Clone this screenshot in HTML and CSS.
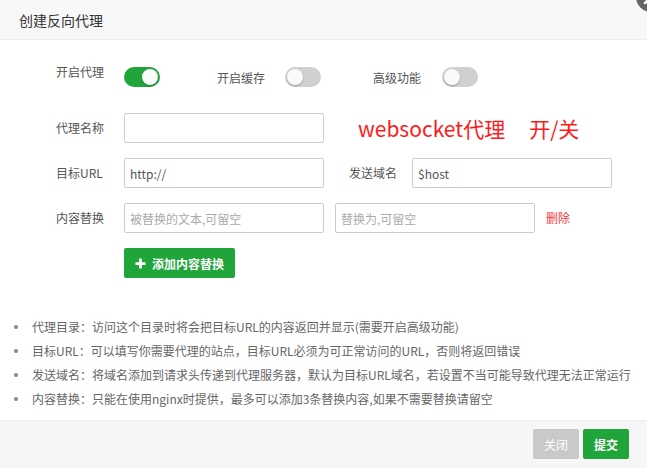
FILE: index.html
```html
<!DOCTYPE html>
<html lang="zh-CN">
<head>
<meta charset="utf-8">
<title>创建反向代理</title>
<link rel="stylesheet" href="styles.css">
</head>
<body>
<div class="dialog">
  <div class="header">
    <span class="title">创建反向代理</span>
    <span class="close">
      <svg viewBox="0 0 30 30" width="30" height="30"><circle cx="15" cy="15" r="15" fill="#666"/><path d="M9 9 L21 21 M21 9 L9 21" stroke="#fff" stroke-width="2.5" stroke-linecap="round"/></svg>
    </span>
  </div>
  <div class="content">
    <div class="switch-row">
      <span class="lbl lbl-first">开启代理</span>
      <span class="toggle on"><span class="knob"></span></span>
      <span class="lbl lbl-sw lbl-2">开启缓存</span>
      <span class="toggle"><span class="knob"></span></span>
      <span class="lbl lbl-sw lbl-3">高级功能</span>
      <span class="toggle"><span class="knob"></span></span>
    </div>
    <div class="row">
      <span class="lbl">代理名称</span>
      <input class="inp" type="text">
      <span class="ws">websocket代理</span>
      <span class="ws ws-sw">开/关</span>
    </div>
    <div class="row">
      <span class="lbl">目标URL</span>
      <input class="inp" type="text" value="http://">
      <span class="lbl lbl-host">发送域名</span>
      <input class="inp inp-host" type="text" value="$host">
    </div>
    <div class="row">
      <span class="lbl">内容替换</span>
      <input class="inp" type="text" placeholder="被替换的文本,可留空">
      <input class="inp inp-rep" type="text" placeholder="替换为,可留空">
      <span class="del">删除</span>
    </div>
    <div class="row row-btn">
      <button class="btn-add" type="button"><svg class="plus" viewBox="0 0 12 12" width="11" height="11"><path d="M6 0.5 V11.5 M0.5 6 H11.5" stroke="#fff" stroke-width="3"/></svg>添加内容替换</button>
    </div>
    <ul class="notes">
      <li>代理目录：访问这个目录时将会把目标URL的内容返回并显示(需要开启高级功能)</li>
      <li>目标URL：可以填写你需要代理的站点，目标URL必须为可正常访问的URL，否则将返回错误</li>
      <li>发送域名：将域名添加到请求头传递到代理服务器，默认为目标URL域名，若设置不当可能导致代理无法正常运行</li>
      <li>内容替换：只能在使用nginx时提供，最多可以添加3条替换内容,如果不需要替换请留空</li>
    </ul>
  </div>
  <div class="footer">
    <button class="btn btn-close" type="button">关闭</button>
    <button class="btn btn-submit" type="button">提交</button>
  </div>
</div>
</body>
</html>
```

FILE: styles.css
```css
html, body {
  margin: 0;
  padding: 0;
  overflow: hidden;
  background: #fff;
}
body {
  font-family: "Microsoft YaHei", "Noto Sans CJK SC", sans-serif;
  font-size: 12px;
  color: #555;
}
.dialog {
  position: relative;
  width: 647px;
  height: 468px;
  display: flex;
  flex-direction: column;
}
.header {
  height: 40px;
  background: #f8f8f8;
  border-bottom: 1px solid #eee;
  box-sizing: border-box;
  padding-left: 19px;
  display: flex;
  align-items: center;
}
.title {
  font-size: 14px;
  color: #333;
  line-height: 20px;
}
.close {
  position: absolute;
  right: -19px;
  top: -18px;
  width: 30px;
  height: 30px;
}
.close svg { display: block; }
.content {
  flex: 1;
  padding: 27px 0 0 56px;
}
.switch-row {
  display: flex;
  align-items: flex-start;
  height: 20px;
}
.lbl {
  display: inline-block;
  width: 48px;
  line-height: 16px;
  white-space: nowrap;
  color: #555;
}
.lbl-first {
  margin-top: -3px;
  margin-right: 20px;
}
.lbl-sw {
  margin-top: 3px;
}
.lbl-2 {
  margin-left: 57px;
  margin-right: 20px;
}
.lbl-3 {
  margin-left: 52px;
  margin-right: 21px;
}
.toggle {
  position: relative;
  display: inline-block;
  width: 36px;
  height: 20px;
  border-radius: 10px;
  background: #d0d0d0;
  box-sizing: border-box;
}
.toggle.on {
  background: #20a53a;
}
.knob {
  position: absolute;
  top: 2px;
  left: 2px;
  width: 16px;
  height: 16px;
  border-radius: 50%;
  background: #fafafa;
  box-shadow: 0 1px 2px rgba(0,0,0,0.25);
}
.toggle.on .knob {
  left: 18px;
}
.row {
  display: flex;
  align-items: center;
  margin-top: 15px;
  height: 30px;
}
.switch-row + .row {
  margin-top: 26px;
}
.row > .lbl:first-child {
  margin-right: 20px;
}
.inp {
  width: 200px;
  height: 30px;
  box-sizing: border-box;
  border: 1px solid #ccc;
  border-radius: 2px;
  padding: 0 5px;
  font-family: "Microsoft YaHei", "Noto Sans CJK SC", sans-serif;
  font-size: 12px;
  color: #555;
  outline: none;
}
.inp::placeholder {
  color: #aaa;
}
.ws {
  color: #ff1a1a;
  font-size: 21px;
  line-height: 24px;
  margin-left: 34px;
  white-space: nowrap;
}
.ws-sw {
  margin-left: 24px;
}
.lbl-host {
  margin-left: 25px;
  margin-right: 15px;
}
.inp-rep {
  margin-left: 11px;
}
.del {
  margin-left: 11px;
  color: #ef3a3a;
  line-height: 16px;
}
.row-btn {
  padding-left: 68px;
}
.btn-add {
  height: 30px;
  width: 111px;
  border: none;
  border-radius: 2px;
  background: #20a53a;
  color: #fff;
  font-family: "Microsoft YaHei", "Noto Sans CJK SC", sans-serif;
  font-size: 12px;
  font-weight: bold;
  display: flex;
  align-items: center;
  padding: 0 0 0 11px;
  cursor: pointer;
}
.plus {
  margin-right: 6px;
}
.notes {
  margin: 37px 0 0 -56px;
  padding: 0 0 0 32px;
  list-style: none;
  color: #666;
}
.notes li {
  position: relative;
  line-height: 24px;
  height: 24px;
  white-space: nowrap;
}
.notes li::before {
  content: "";
  position: absolute;
  left: -18px;
  top: 10px;
  width: 4px;
  height: 4px;
  border-radius: 50%;
  background: #888;
}
.footer {
  height: 48px;
  box-sizing: border-box;
  border-top: 1px solid #eee;
  background: #f6f6f6;
  display: flex;
  justify-content: flex-end;
  align-items: flex-start;
  padding: 8px 18px 0 0;
  gap: 4px;
}
.btn {
  width: 46px;
  height: 30px;
  border: none;
  border-radius: 2px;
  color: #fff;
  font-family: "Microsoft YaHei", "Noto Sans CJK SC", sans-serif;
  font-size: 12px;
  cursor: pointer;
}
.btn-close {
  background: #c9c9c9;
}
.btn-submit {
  background: #20a53a;
  font-weight: bold;
}
```
